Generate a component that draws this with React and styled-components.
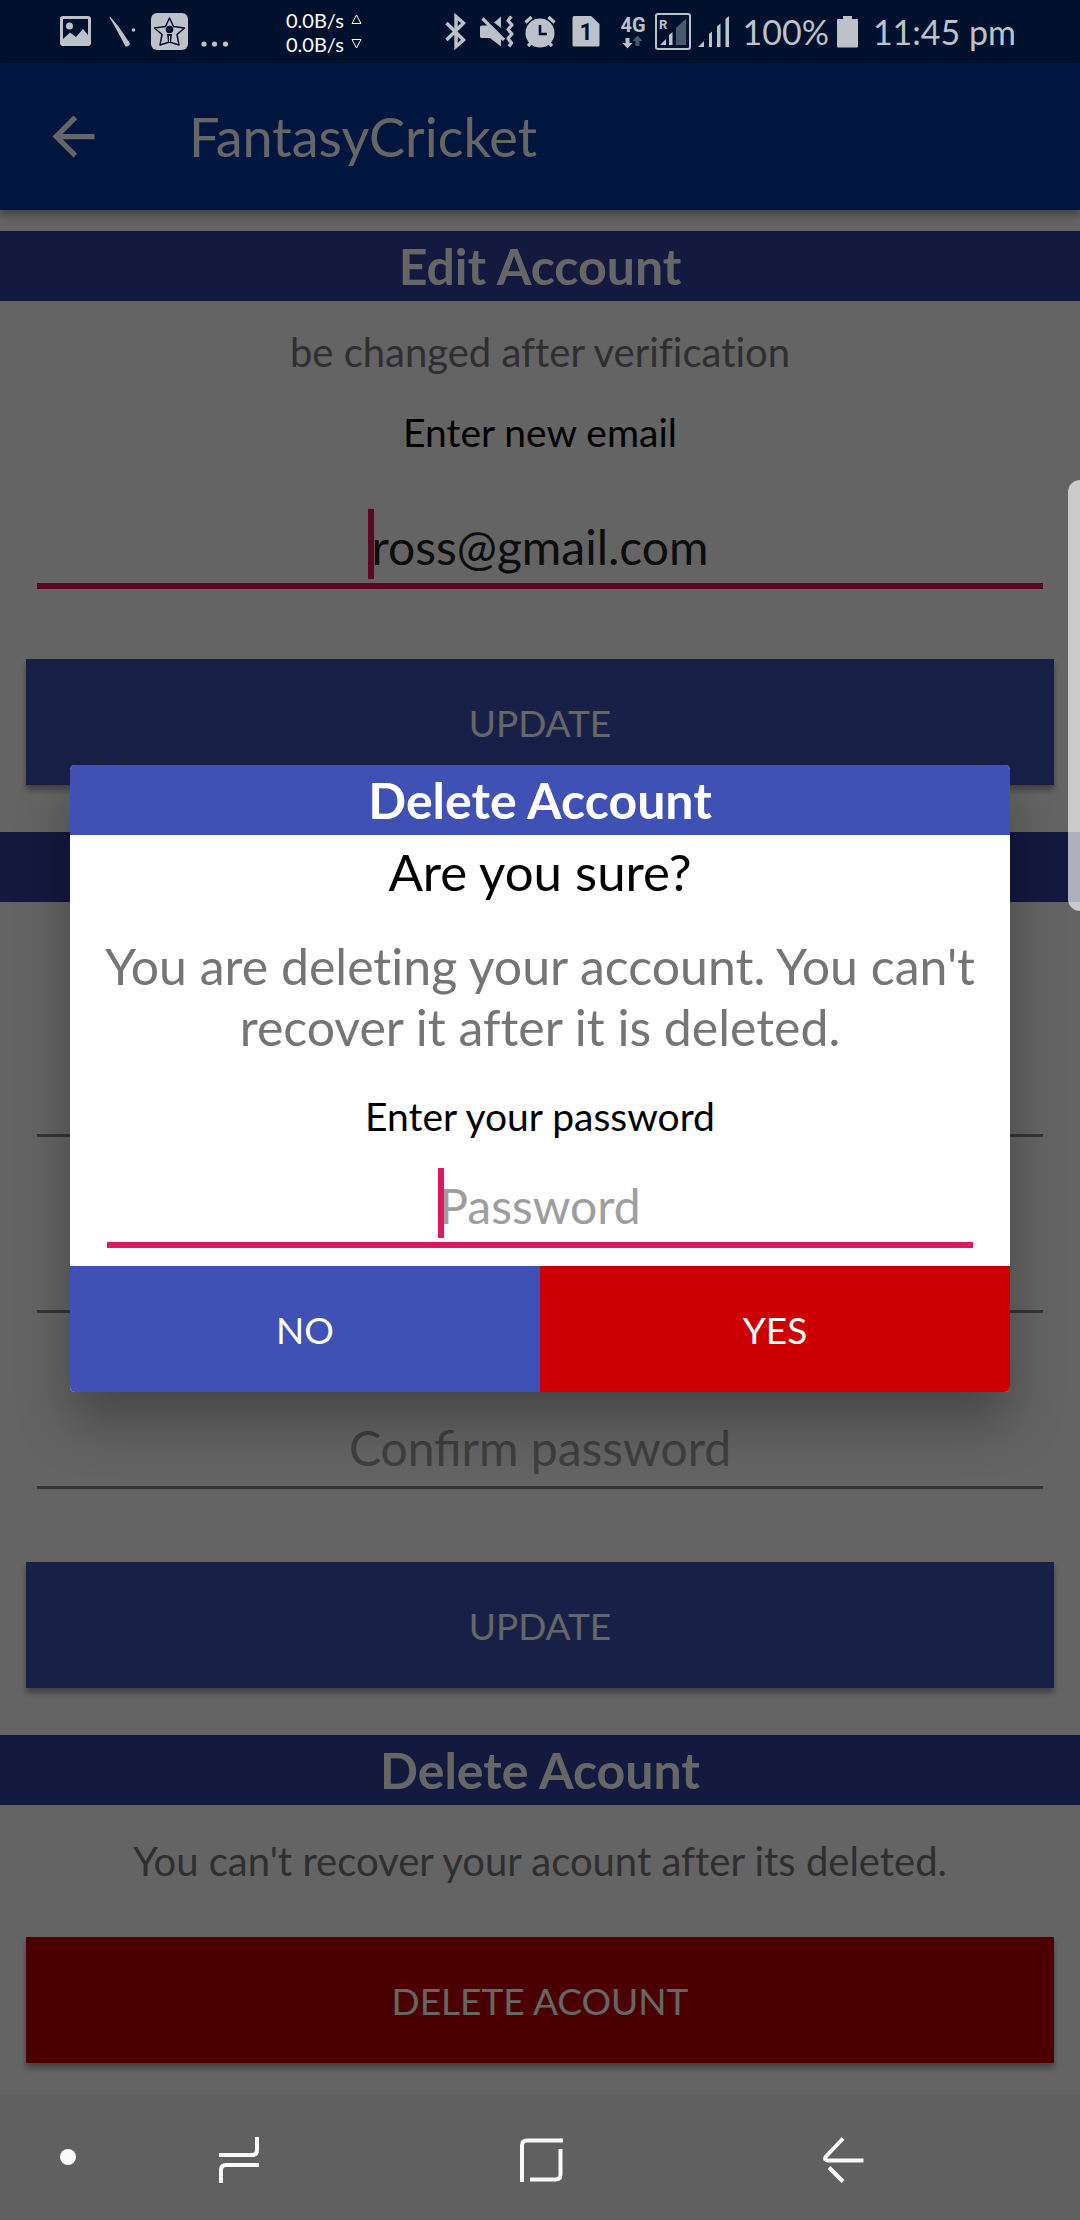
import React from "react";
import styled, { createGlobalStyle } from "styled-components";

const color = {
  page: "#fafafa",
  ink: "#000000",
  appBar: "#00379c",
  band: "#303f9f",
  primary: "#3f51b5",
  danger: "#cc0000",
  dangerDeep: "#b80000",
  accent: "#d81b60",
  status: "#bcc1ca",
  statusBar: "#00112d",
  navBar: "#606060",
};

const GlobalStyle = createGlobalStyle`
  *, *::before, *::after { box-sizing: border-box; }
  body { margin: 0; background: ${color.navBar}; font-variant-ligatures: none; }
  body, button, input { font-family: Lato, "Open Sans", sans-serif; }
  h1, h2, h3, p { margin: 0; font-weight: 400; }
  svg { display: block; flex: none; }
`;

const Screen = styled.div`
  display: flex;
  flex-direction: column;
  min-height: 100vh;
`;

/* ---------- status bar ---------- */

const StatusBar = styled.header`
  display: flex;
  align-items: center;
  height: 63px;
  padding: 0 64px 0 56px;
  background: ${color.statusBar};
  color: ${color.status};
`;

const IconRun = styled.div`
  display: flex;
  align-items: center;
`;

const Speeds = styled.div`
  display: flex;
  flex-direction: column;
  margin-left: 54px;
  color: #ffffff;
`;

const Speed = styled.div`
  display: flex;
  align-items: center;
  gap: 7px;
  font-size: 20px;
  line-height: 24px;
`;

const StatusRight = styled.div`
  display: flex;
  align-items: center;
  margin-left: auto;
  font-size: 34px;
  line-height: 40px;
  white-space: nowrap;
`;

const Glyph = ({ x, w, children }) => (
  <svg width={w} height="63" viewBox={`${x} 0 ${w} 63`} fill="currentColor" aria-hidden="true">
    {children}
  </svg>
);

const NotificationIcons = () => (
  <IconRun>
    <Glyph x={56} w={44}>
      <path
        fillRule="evenodd"
        d="M63 16H88a3 3 0 0 1 3 3V43a3 3 0 0 1-3 3H63a3 3 0 0 1-3-3V19a3 3 0 0 1 3-3ZM63 19V39L70 32.500L76 37L83 29L88 35V19Z"
      />
      <circle cx="69.500" cy="26" r="3.500" />
    </Glyph>
    <Glyph x={100} w={44}>
      <path d="M110 16.500L118.500 26.500L130 43.500Q129 47 125.500 46.500L116 28.500L109.500 17.500Z" />
      <circle cx="133.500" cy="30" r="1.800" />
    </Glyph>
    <Glyph x={144} w={50}>
      <rect x="151" y="13" width="37" height="37" rx="6" />
      <path
        d="M169.500 18L173.500 26.500L184.500 28L177 34.500L179 45L169.500 42L160 45L162 34.500L154.500 28L165.500 26.500Z"
        fill="none"
        stroke={color.statusBar}
        strokeWidth="1.500"
        strokeLinejoin="round"
      />
      <circle cx="169.500" cy="29.500" r="3.800" fill={color.statusBar} />
      <path d="M167 34H172L171 42H168Z" fill={color.statusBar} />
      <path d="M169.500 36V42" stroke="currentColor" strokeWidth="1" />
    </Glyph>
    <Glyph x={194} w={38}>
      <circle cx="204" cy="44" r="2.600" />
      <circle cx="214.500" cy="44" r="2.600" />
      <circle cx="225.500" cy="44" r="2.600" />
    </Glyph>
  </IconRun>
);

const Triangle = ({ down }) => (
  <svg width="11" height="11" viewBox="0 0 11 11" fill="none" stroke="currentColor" aria-hidden="true">
    <path d={down ? "M1 1.500H10L5.500 10Z" : "M1 9.500H10L5.500 1Z"} />
  </svg>
);

const DeviceIcons = () => (
  <IconRun>
    <Glyph x={440} w={33}>
      <path
        d="M446.500 23L463.500 40L456 46.500V16.500L463.500 23L446.500 40"
        fill="none"
        stroke="currentColor"
        strokeWidth="3.400"
      />
    </Glyph>
    <Glyph x={473} w={47}>
      <path d="M480 27Q480 25.500 482 25.500H488L501 38V46.500L490 38H482Q480 38 480 36.500Z" />
      <path d="M501 16.500V28L494 22.500Z" />
      <path d="M482.500 18.500L504 40" stroke="currentColor" strokeWidth="3.200" />
      <path
        d="M511.500 16.500L508 20.500L512 25L508 29.500L512 34L508 38.500L511.500 43L509 46.500"
        fill="none"
        stroke="currentColor"
        strokeWidth="3.200"
        strokeLinejoin="round"
      />
    </Glyph>
    <Glyph x={520} w={42}>
      <circle cx="540" cy="33" r="14.500" />
      <path
        d="M525.500 22.500L531.500 17M548.500 17L554.500 22.500M532 42L528 46M548 42L552 46"
        stroke="currentColor"
        strokeWidth="3.200"
      />
      <path d="M540 25V34H547" fill="none" stroke={color.statusBar} strokeWidth="2.600" />
    </Glyph>
    <Glyph x={562} w={50}>
      <path d="M574 16H591L599.500 24V45Q599.500 46.500 598 46.500H574Q572.500 46.500 572.500 45V18Q572.500 16 574 16Z" />
      <text x="586" y="40" textAnchor="middle" fontFamily="Roboto, sans-serif" fontWeight="700" fontSize="23" fill={color.statusBar}>
        1
      </text>
    </Glyph>
    <Glyph x={612} w={38}>
      <text x="633" y="32" textAnchor="middle" fontFamily="Roboto, sans-serif" fontWeight="700" fontSize="20">
        4G
      </text>
      <path d="M625.500 38H629.500V43H632.500L627.500 48.500L622.500 43H625.500Z" />
      <path d="M637.500 35.500L642.500 41H639.500V46H635.500V41H632.500Z" opacity=".4" />
    </Glyph>
    <Glyph x={650} w={44}>
      <rect x="656" y="14" width="34" height="35" rx="2" fill="none" stroke="currentColor" strokeWidth="2" />
      <text x="659" y="29" fontFamily="Roboto, sans-serif" fontWeight="700" fontSize="13">
        R
      </text>
      <path d="M660 45L666 39V45ZM669 45V35L672.500 32V45Z" />
      <path d="M676 45V28L686 18.500V45Z" opacity=".4" />
    </Glyph>
    <Glyph x={694} w={48}>
      <path d="M698 47L704 41V47ZM709 47V34L712 31.500V47ZM717 47V26.500L720.500 23.500V47ZM725.500 47V19L729 16V47Z" />
    </Glyph>
  </IconRun>
);

const BatteryIcon = () => (
  <Glyph x={832} w={44}>
    <path d="M846 16H855V19H860Q861 19 861 20V46Q861 47.500 860 47.500H841Q840 47.500 840 46V20Q840 19 841 19H846Z" />
  </Glyph>
);

/* ---------- app window ---------- */

const Window = styled.div`
  position: relative;
  display: flex;
  flex: 1;
  flex-direction: column;
  background: ${color.page};
`;

const AppBar = styled.div`
  display: flex;
  align-items: center;
  gap: 84px;
  height: 147px;
  padding: 0 42px;
  background: ${color.appBar};
  color: #ffffff;
  box-shadow: 0 4px 10px rgba(0, 0, 0, 0.4);
`;

const BackButton = styled.button`
  padding: 0;
  border: 0;
  background: none;
  color: inherit;
`;

const AppTitle = styled.h1`
  font-size: 54px;
  line-height: 64px;
`;

const Content = styled.main`
  display: flex;
  flex-direction: column;
  padding: 21px 0 31px;
`;

const Band = styled.h2`
  height: 70px;
  background: ${({ $tone }) => color[$tone || "band"]};
  color: #ffffff;
  font-size: 50px;
  font-weight: 700;
  line-height: 70px;
  text-align: center;
`;

const Form = styled.form`
  display: flex;
  flex-direction: column;
  padding: 0 26px 47px;

  &:last-child {
    padding-bottom: 0;
  }
`;

const Hint = styled.p`
  margin: ${({ $top }) => $top}px 0 0;
  color: #757575;
  font-size: 40px;
  line-height: 48px;
  text-align: center;
`;

const Label = styled.label`
  margin-top: ${({ $top }) => $top}px;
  color: ${color.ink};
  font-size: 39px;
  line-height: 48px;
  text-align: center;
`;

const FieldBox = styled.div`
  position: relative;
  display: flex;
  height: 80px;
  margin: ${({ $top }) => $top}px 11px 0;
  border-bottom: ${({ $focused }) => ($focused ? `6px solid ${color.accent}` : "3px solid #858585")};
`;

const Input = styled.input`
  width: 100%;
  min-width: 0;
  padding: 0;
  border: 0;
  outline: 0;
  background: none;
  color: #212121;
  font-size: 48px;
  text-align: center;

  &::placeholder {
    color: #9e9e9e;
    opacity: 1;
  }
`;

const Caret = styled.span`
  position: absolute;
  top: 0;
  left: calc(50% - ${({ $back }) => $back}px);
  width: 6px;
  height: 70px;
  background: ${color.accent};
`;

const WideButton = styled.button`
  height: 126px;
  margin-top: ${({ $top }) => $top}px;
  padding: 0;
  border: 0;
  background: ${({ $tone }) => color[$tone]};
  color: #ffffff;
  font-size: 37px;
  box-shadow: 0 5px 6px rgba(0, 0, 0, 0.35);
`;

/* ---------- dialog ---------- */

const Scrim = styled.div`
  position: absolute;
  inset: 0;
  display: flex;
  align-items: center;
  padding: 0 70px;
  background: rgba(0, 0, 0, 0.6);
`;

const Dialog = styled.section`
  flex: 1;
  overflow: hidden;
  border-radius: 5px;
  background: #ffffff;
  box-shadow: 0 30px 54px rgba(0, 0, 0, 0.3);
`;

const DialogBody = styled.div`
  display: flex;
  flex-direction: column;
  padding: 6px 26px 18px;
`;

const Question = styled.h3`
  font-size: 51px;
  line-height: 61px;
  text-align: center;
`;

const Message = styled.p`
  margin: 34px 0 0;
  color: #757575;
  font-size: 50px;
  line-height: 61px;
  text-align: center;
`;

const Actions = styled.div`
  display: grid;
  grid-template-columns: 1fr 1fr;
`;

const ActionButton = styled.button`
  height: 126px;
  padding: 0;
  border: 0;
  background: ${({ $tone }) => color[$tone]};
  color: #ffffff;
  font-size: 37px;
`;

const EdgeHandle = styled.div`
  position: absolute;
  top: 417px;
  right: 0;
  width: 12px;
  height: 431px;
  border-radius: 14px 0 0 14px;
  background: rgba(255, 255, 255, 0.66);
`;

/* ---------- navigation bar ---------- */

const NavBar = styled.nav`
  display: flex;
  height: 126px;
  padding: 0 86px 0 48px;
  background: ${color.navBar};
  color: #fafafa;
`;

const NavButton = styled.button`
  display: flex;
  flex: ${({ $fixed }) => ($fixed ? "0 0 40px" : "1")};
  align-items: center;
  justify-content: center;
  padding: 0;
  border: 0;
  background: none;
  color: inherit;
`;

const NavGlyph = ({ x, d }) => (
  <svg width="60" height="126" viewBox={`${x} 2094 60 126`} fill="none" stroke="currentColor" strokeWidth="4" aria-hidden="true">
    <path d={d} />
  </svg>
);

const Field = ({ top, caret, ...input }) => (
  <FieldBox $top={top} $focused={caret !== undefined}>
    {caret !== undefined && <Caret $back={caret} />}
    <Input {...input} />
  </FieldBox>
);

export default function App() {
  return (
    <Screen>
      <GlobalStyle />
      <StatusBar>
        <NotificationIcons />
        <Speeds>
          <Speed>
            0.0B/s <Triangle />
          </Speed>
          <Speed>
            0.0B/s <Triangle down />
          </Speed>
        </Speeds>
        <StatusRight>
          <DeviceIcons />
          <span>100%</span>
          <BatteryIcon />
          <span>11:45 pm</span>
        </StatusRight>
      </StatusBar>

      <Window>
        <AppBar>
          <BackButton type="button" aria-label="Back">
            <svg width="63" height="63" viewBox="0 0 24 24" fill="currentColor" aria-hidden="true">
              <path d="M20 11H7.830l5.590-5.590L12 4l-8 8 8 8 1.410-1.410L7.830 13H20z" />
            </svg>
          </BackButton>
          <AppTitle>FantasyCricket</AppTitle>
        </AppBar>

        <Content>
          <Band>Edit Account</Band>
          <Form>
            <Hint $top={27}>be changed after verification</Hint>
            <Label $top={32} htmlFor="email">
              Enter new email
            </Label>
            <Field top={53} caret={172} id="email" type="text" defaultValue="ross@gmail.com" />
            <WideButton $top={70} $tone="primary" type="button">
              UPDATE
            </WideButton>
          </Form>

          <Band as="div" />
          <Form>
            <Field top={155} type="password" aria-label="Current password" />
            <Field top={96} type="password" aria-label="New password" />
            <Field top={96} type="password" aria-label="Confirm password" placeholder="Confirm password" />
            <WideButton $top={73} $tone="primary" type="button">
              UPDATE
            </WideButton>
          </Form>

          <Band>Delete Acount</Band>
          <Form as="div">
            <Hint $top={32}>You can't recover your acount after its deleted.</Hint>
            <WideButton $top={52} $tone="dangerDeep" type="button">
              DELETE ACOUNT
            </WideButton>
          </Form>
        </Content>

        <Scrim>
          <Dialog role="dialog" aria-labelledby="dialog-title">
            <Band $tone="primary" id="dialog-title">
              Delete Account
            </Band>
            <DialogBody>
              <Question>Are you sure?</Question>
              <Message>You are deleting your account. You can't recover it after it is deleted.</Message>
              <Label $top={34} htmlFor="password">
                Enter your password
              </Label>
              <Field top={28} caret={102} id="password" type="password" placeholder="Password" />
            </DialogBody>
            <Actions>
              <ActionButton $tone="primary" type="button">
                NO
              </ActionButton>
              <ActionButton $tone="danger" type="button">
                YES
              </ActionButton>
            </Actions>
          </Dialog>
        </Scrim>
        <EdgeHandle />
      </Window>

      <NavBar>
        <NavButton $fixed type="button" aria-label="Hide navigation bar">
          <svg width="16" height="16" viewBox="0 0 16 16" fill="currentColor" aria-hidden="true">
            <circle cx="8" cy="8" r="8" />
          </svg>
        </NavButton>
        <NavButton type="button" aria-label="Recent apps">
          <NavGlyph x={209} d="M219 2155H252Q257 2155 257 2150V2137M259 2165H226Q221 2165 221 2170V2183" />
        </NavButton>
        <NavButton type="button" aria-label="Home">
          <NavGlyph x={511} d="M563 2140.500H527Q522 2140.500 522 2145.500V2182M560.500 2149V2174.500Q560.500 2179.500 555.500 2179.500H530" />
        </NavButton>
        <NavButton type="button" aria-label="Back">
          <NavGlyph x={814} d="M844 2138.500L826.500 2157Q825 2160.500 829 2160.500H864.500M830 2167.500L844 2181.500" />
        </NavButton>
      </NavBar>
    </Screen>
  );
}
